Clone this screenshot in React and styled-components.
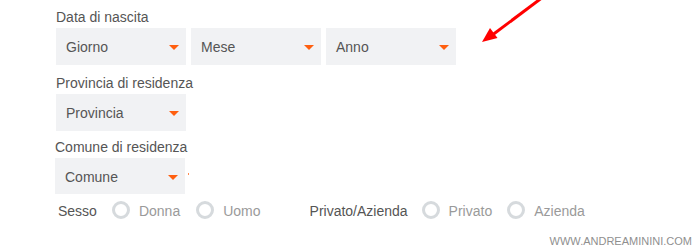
import React from "react";
import styled, { createGlobalStyle } from "styled-components";

const Global = createGlobalStyle`
  html, body { margin: 0; padding: 0; background: #fff; }
  body { width: 699px; height: 250px; overflow: hidden; font-family: "Liberation Sans", Arial, sans-serif; }
`;

const Page = styled.div`
  position: relative;
  width: 699px;
  height: 250px;
  box-sizing: border-box;
  padding: 9px 0 0 56px;
  font-family: "Liberation Sans", Arial, sans-serif;
`;

const Field = styled.div`
  display: flex;
  flex-direction: column;
  align-items: flex-start;
  margin-top: ${(p) => p.$top || 0}px;
  margin-left: ${(p) => p.$shift || 0}px;
`;

const Label = styled.div`
  font-size: 14px;
  line-height: 16px;
  color: #555;
`;

const SelectRow = styled.div`
  display: flex;
  align-items: center;
  gap: 5px;
  margin-top: 3px;
`;

const Select = styled.div`
  box-sizing: border-box;
  width: 130px;
  height: ${(p) => p.$h || 37}px;
  background: #f1f2f4;
  display: flex;
  align-items: center;
  justify-content: space-between;
  padding: 1px 7px 0 10px;
  font-size: 14px;
  color: #555;
`;

const Caret = styled.span`
  width: 0;
  height: 0;
  border-left: 5px solid transparent;
  border-right: 5px solid transparent;
  border-top: 5px solid #ff5f0f;
  margin-top: 1px;
`;

const Tick = styled.span`
  width: 1px;
  height: 2px;
  background: #ff8a50;
  margin: -4px 0 0 -2px;
`;

const RadioRow = styled.div`
  display: flex;
  align-items: center;
  margin: 7px 0 0 2px;
  height: 18px;
`;

const Group = styled.div`
  display: flex;
  align-items: center;
  margin-left: ${(p) => p.$ml || 0}px;
`;

const GroupLabel = styled.span`
  font-size: 14px;
  line-height: 16px;
  color: #555;
  margin-top: 1px;
`;

const Option = styled.label`
  display: flex;
  align-items: center;
  gap: 9px;
  margin-left: ${(p) => p.$ml || 15}px;
  font-size: 14px;
  line-height: 16px;
  color: #9a9a9a;
`;

const Circle = styled.span`
  box-sizing: border-box;
  width: 18px;
  height: 18px;
  border-radius: 50%;
  border: 3.5px solid #d6dadd;
  background: #fff;
`;

const OptionText = styled.span`
  margin-top: 1px;
`;

const Watermark = styled.div`
  position: absolute;
  right: 7px;
  bottom: 3px;
  font-size: 11px;
  line-height: 12px;
  color: #8f8f8f;
  letter-spacing: 0;
`;

const ArrowSvg = styled.svg`
  position: absolute;
  left: 0;
  top: 0;
  pointer-events: none;
`;

function Arrow() {
  return (
    <ArrowSvg width="699" height="250" viewBox="0 0 699 250">
      <line x1="543" y1="-3" x2="491" y2="36" stroke="#ff0000" strokeWidth="3" />
      <polygon points="482,42 490,28 497.5,38" fill="#ff0000" />
    </ArrowSvg>
  );
}

export default function App() {
  return (
    <>
      <Global />
      <Page>
        <Field>
          <Label>Data di nascita</Label>
          <SelectRow>
            <Select>Giorno<Caret /></Select>
            <Select>Mese<Caret /></Select>
            <Select>Anno<Caret /></Select>
          </SelectRow>
        </Field>
        <Field $top={10}>
          <Label>Provincia di residenza</Label>
          <SelectRow>
            <Select>Provincia<Caret /></Select>
          </SelectRow>
        </Field>
        <Field $top={8} $shift={-1}>
          <Label>Comune di residenza</Label>
          <SelectRow>
            <Select $h={36}>Comune<Caret /></Select>
            <Tick />
          </SelectRow>
        </Field>
        <RadioRow>
          <Group>
            <GroupLabel>Sesso</GroupLabel>
            <Option><Circle /><OptionText>Donna</OptionText></Option>
            <Option $ml={16}><Circle /><OptionText>Uomo</OptionText></Option>
          </Group>
          <Group $ml={49}>
            <GroupLabel>Privato/Azienda</GroupLabel>
            <Option $ml={14}><Circle /><OptionText>Privato</OptionText></Option>
            <Option><Circle /><OptionText>Azienda</OptionText></Option>
          </Group>
        </RadioRow>
        <Watermark>WWW.ANDREAMININI.COM</Watermark>
        <Arrow />
      </Page>
    </>
  );
}
